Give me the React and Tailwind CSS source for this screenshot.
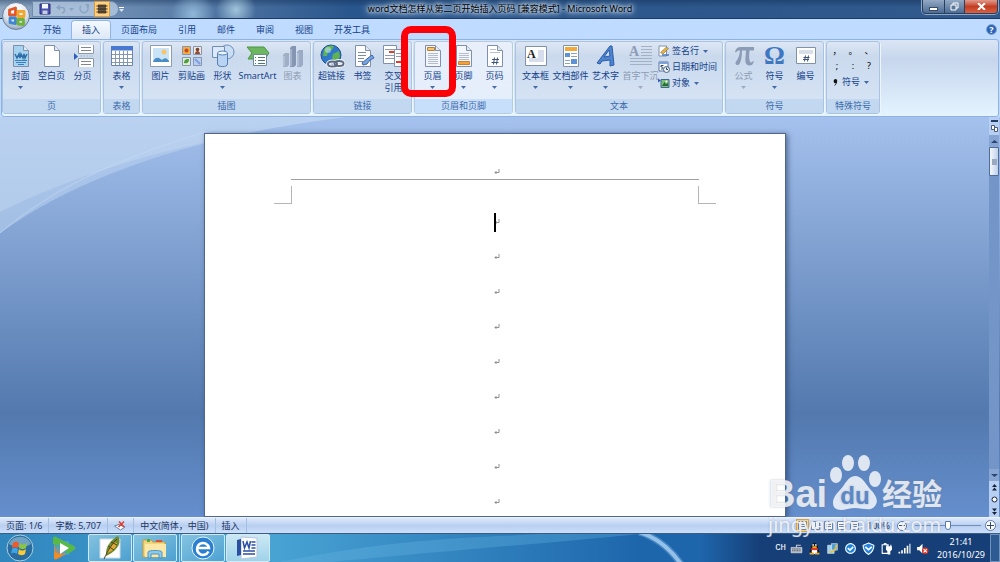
/**
 * App.jsx — Word processor window with ribbon, page view and desktop taskbar
 */

import React, { useState } from "react";

/* ---------- ribbon icons (24 x 24) ---------- */

const Svg = ({ children, className = "size-6" }) => (
  <svg viewBox="0 0 24 24" className={`overflow-visible ${className}`} aria-hidden="true">
    {children}
  </svg>
);

const Sheet = ({ fill = "#fff", children }) => (
  <Svg>
    <path d="M4.5 1.5h10l5 5v16h-15z" fill={fill} stroke="#7f90a8" />
    <path d="M14.5 1.5v5h5" fill="#e3eaf4" stroke="#7f90a8" />
    {children}
  </Svg>
);

const CoverIcon = () => (
  <Sheet fill="#a5d3f0">
    <path d="M6 10l2 4 2-4 1 4 1-4 2 4 1-4 1 4 2-4" fill="none" stroke="#2e6ea8" strokeWidth="1.500" />
    <path d="M6 16.500h12M7 18.500h10M9 20.500h6" stroke="#3b7fba" />
  </Sheet>
);

const BreakIcon = () => (
  <Svg>
    <path d="M7.5 1v8.5h15V1M7.5 23v-8.5h15V23" fill="#fff" stroke="#8a99b0" />
    <path d="M10 3.500h10M10 6.500h10M10 17.500h10M10 20.500h10" stroke="#7d8798" />
    <path d="M3 9l4 3.500L3 16z" fill="#2b5fb8" />
    <path d="M9 12h13" stroke="#a9b9cf" strokeDasharray="2 1" />
  </Svg>
);

const TableIcon = () => (
  <Svg>
    <path d="M1.500 2.500h21v19h-21z" fill="#fff" stroke="#6c84ab" />
    <path d="M1 2h22v4.500H1z" fill="#4878cf" />
    <path
      d="M2 10.500h20M2 14.500h20M2 18.500h20M5.500 7v14M9.500 7v14M13.500 7v14M17.500 7v14"
      stroke="#8398b6"
    />
  </Svg>
);

const PictureIcon = () => (
  <Svg>
    <path d="M1.500 1.500h21v21h-21z" fill="#fff" stroke="#8c9cb6" />
    <path d="M4 4h16v14H4z" fill="#c9e4f8" />
    <circle cx="15" cy="8" r="2.500" fill="#f6c56a" />
    <path d="M4 18c1-4 4-5 6-4l3 2c3-3 5-2 7 1v1z" fill="#4a8cc4" />
  </Svg>
);

const ClipArtIcon = () => (
  <Svg>
    <g stroke="#8796ae">
      <path d="M2.500 2.500h8v8h-8z" fill="#f5ad3c" />
      <path d="M13.500 2.500h8v8h-8z" fill="#efe6dc" />
      <path d="M2.500 13.500h8v8h-8z" fill="#dcefd2" />
      <path d="M13.500 13.500h8v8h-8z" fill="#b7cff2" />
    </g>
    <circle cx="6.500" cy="6.500" r="2" fill="#c5482b" />
    <circle cx="17.500" cy="5.500" r="1.800" fill="#744030" />
    <path d="M15 10c0-4 5-4 5 0z" fill="#8e4a34" />
    <path d="M4 19c0-4 3-4 5-4 0 4-2 5-5 4z" fill="#4e9a3c" />
    <path d="M15 15l5 5" stroke="#7ea0dc" strokeWidth="2" />
  </Svg>
);

const ShapesIcon = () => (
  <Svg>
    <circle cx="16" cy="8" r="7" fill="#c9ddf4" stroke="#6f8fbb" />
    <path d="M1.500 2.500h12v11h-12z" fill="#dce9f8" stroke="#6f8fbb" />
    <path d="M6.500 9v11c0 3.500 10 3.500 10 0V9" fill="#b8d4f2" stroke="#5780b5" />
    <ellipse cx="11.500" cy="9" rx="5" ry="2" fill="#eaf3fd" stroke="#5780b5" />
  </Svg>
);

const SmartArtIcon = () => (
  <Svg>
    <path d="M1 3h17l5 6-4 6H2l4-6z" fill="#6cb75f" stroke="#4c9545" />
    <path d="M7.500 10.500h13v11h-13z" fill="#fff" stroke="#6f8a9d" />
    <path d="M12 13.500h7M12 16.500h7M12 19.500h7M9 13.500h1M9 16.500h1M9 19.500h1" stroke="#477a6a" />
  </Svg>
);

const ChartIcon = () => (
  <Svg>
    <path d="M2 11l2-2h4v12l-2 2H2z" fill="#a0aec6" />
    <path d="M9 4l2-2h4v19l-2 2H9z" fill="#8596b3" />
    <path d="M16 8l2-2h4v15l-2 2h-4z" fill="#9cabc5" />
    <path d="M3 12v10M10 5v17M17 9v13" stroke="#c5d0e0" />
  </Svg>
);

const LinkIcon = () => (
  <Svg>
    <circle cx="11" cy="11" r="10" fill="#2f78c8" stroke="#1f4f91" />
    <path d="M4 5c3-4 8-4 10-3l-2 4-4 1-1 5-4 0zM13 10l6-3 1 6-5 5-3-4z" fill="#5fb254" />
    <circle cx="8" cy="6" r="3" fill="#bfe2f6" opacity=".6" />
    <g fill="none" strokeWidth="2">
      <ellipse cx="12.500" cy="20" rx="4.500" ry="2.500" stroke="#f2f5f9" strokeWidth="4" />
      <ellipse cx="19" cy="19.500" rx="4.500" ry="2.500" stroke="#f2f5f9" strokeWidth="4" />
      <ellipse cx="12.500" cy="20" rx="4.500" ry="2.500" stroke="#5c6b82" />
      <ellipse cx="19" cy="19.500" rx="4.500" ry="2.500" stroke="#5c6b82" />
    </g>
  </Svg>
);

const BookmarkIcon = () => (
  <Sheet>
    <path d="M7 8.500h8M7 11.500h8M7 14.500h6M7 17.500h5" stroke="#7b8ba3" />
    <path d="M11 19l6-5 4-3 2 3-4 2-3 4-4 1z" fill="#7aa4df" stroke="#3a66ac" />
  </Sheet>
);

const CrossRefIcon = () => (
  <Svg>
    <path d="M1.500 1.500h13v18h-13z" fill="#fff" stroke="#7f90a8" />
    <path d="M3 5.500h10M3 11.500h10M3 14.500h10" stroke="#8e9bb0" />
    <path d="M7 7h5v2H7z" fill="#d8402c" />
    <path d="M12.500 5.500h10v17h-10z" fill="#fff" stroke="#7f90a8" />
    <path d="M14 17h7v2h-7z" fill="#d8402c" />
    <path d="M14 9.500h7M14 12.500h7" stroke="#8e9bb0" />
  </Svg>
);

const BodyLines = () => (
  <path d="M7 9.500h10M7 11.500h10M7 13.500h10M7 15.500h10M7 17.500h10M7 19.500h10" stroke="#b3bdcc" />
);

const HeaderIcon = () => (
  <Sheet fill="#f3f6fa">
    <BodyLines />
    <path d="M6.500 3.500h7v3h-7z" fill="#f7c36c" stroke="#b5803a" />
  </Sheet>
);

const FooterIcon = () => (
  <Sheet fill="#f3f6fa">
    <BodyLines />
    <path d="M6.500 17.500h11v3h-11z" fill="#f4a13c" stroke="#c9812f" />
  </Sheet>
);

const PageNoIcon = () => (
  <Sheet>
    <path d="M7 5.500h6M7 8.500h10" stroke="#b6c0ce" />
    <path d="M11.500 13.500l-1 7M14.500 13.500l-1 7M9 15.500h7M8.500 18.500h7" stroke="#3d5478" />
  </Sheet>
);

const TextBoxIcon = () => (
  <Svg>
    <path d="M1.500 2.500h21v19h-21z" fill="#fff" stroke="#8391a8" />
    <path d="M14 6h6v12H5v-4h9z" fill="#d5deea" />
    <text x="3" y="14" fontSize="12" fontFamily="Liberation Serif" fontWeight="bold" fill="#222">
      A
    </text>
  </Svg>
);

const QuickPartsIcon = () => (
  <Svg>
    <path d="M4.500 1.500h15v21h-15z" fill="#fff" stroke="#8391a8" />
    <path d="M6 3h12v4H6z" fill="#f2a93b" />
    <path d="M6 9h5v4H6zM12 15h6v5h-6z" fill="#5f92d4" />
    <path d="M12 9.500h6M12 12.500h6M6 16.500h5M6 19.500h5" stroke="#8da2c1" />
  </Svg>
);

const WordArtIcon = () => (
  <Svg>
    <path
      d="M3 19l13-17h2l2 19-4 1v-6l-8 1-2 3zM10 13l6-1-1-6z"
      fill="#4d84cf"
      stroke="#2c5ca6"
      fillRule="evenodd"
    />
  </Svg>
);

const DropCapIcon = () => (
  <Svg>
    <text x="0" y="12" fontSize="14" fontFamily="Liberation Serif" fontWeight="bold" fill="#8d9cb6">
      A
    </text>
    <path
      d="M12 2.500h11M12 5.500h11M12 8.500h11M12 11.500h11M1 14.500h22M1 17.500h22M1 20.500h22"
      stroke="#a3b0c5"
    />
  </Svg>
);

const PiIcon = () => (
  <Svg>
    <path
      d="M3 8c1-4 3-5 6-5h13v3.500h-4.500c-.5 6-.5 9 .5 11 1 1.500 2 1 3-.5l.8.5c-.8 3-2.300 4-4.300 4-3.500 0-4.500-3-4-8l.5-7h-4c0 6-1 11-2.500 13.500-1.500 2-4.500 1-4-1.500 2-3 4-6 4.500-12C6 6.500 5 7 4 8.500z"
      fill="#8d9cb6"
    />
  </Svg>
);

const OmegaIcon = () => (
  <span className="grid size-6 place-items-center font-['Liberation_Serif'] text-[26px] leading-6 font-bold text-[#3e76c2]">
    Ω
  </span>
);

const NumberIcon = () => (
  <Svg>
    <path d="M2.500 3.500h19v16h-19z" fill="#fff" stroke="#8391a8" />
    <path d="M5 6h14v4H5z" fill="#d9dfe8" />
    <path d="M11.500 11.500l-1 6M14.500 11.500l-1 6M9.500 13.500h6M9 15.500h6" stroke="#3d5478" />
  </Svg>
);

/* ---------- ribbon data ---------- */

const TABS = ["开始", "插入", "页面布局", "引用", "邮件", "审阅", "视图", "开发工具"];

const GROUPS = [
  {
    name: "页",
    items: [
      { label: "封面", icon: CoverIcon, menu: true },
      { label: "空白页", icon: Sheet },
      { label: "分页", icon: BreakIcon },
    ],
  },
  { name: "表格", items: [{ label: "表格", icon: TableIcon, menu: true }] },
  {
    name: "插图",
    items: [
      { label: "图片", icon: PictureIcon },
      { label: "剪贴画", icon: ClipArtIcon },
      { label: "形状", icon: ShapesIcon, menu: true },
      { label: "SmartArt", icon: SmartArtIcon, width: "w-[39px]" },
      { label: "图表", icon: ChartIcon, disabled: true },
    ],
  },
  {
    name: "链接",
    items: [
      { label: "超链接", icon: LinkIcon },
      { label: "书签", icon: BookmarkIcon },
      { label: "交叉", second: "引用", icon: CrossRefIcon },
    ],
  },
  {
    name: "页眉和页脚",
    hot: true,
    items: [
      { label: "页眉", icon: HeaderIcon, menu: true, marked: true },
      { label: "页脚", icon: FooterIcon, menu: true },
      { label: "页码", icon: PageNoIcon, menu: true },
    ],
  },
  {
    name: "文本",
    items: [
      { label: "文本框", icon: TextBoxIcon, menu: true, width: "w-[35px]" },
      { label: "文档部件", icon: QuickPartsIcon, menu: true, width: "w-[35px]" },
      { label: "艺术字", icon: WordArtIcon, menu: true, width: "w-[35px]" },
      { label: "首字下沉", icon: DropCapIcon, menu: true, disabled: true, width: "w-[35px]" },
    ],
    extra: TextList,
  },
  {
    name: "符号",
    items: [
      { label: "公式", icon: PiIcon, menu: true, disabled: true },
      { label: "符号", icon: OmegaIcon, menu: true },
      { label: "编号", icon: NumberIcon },
    ],
  },
  { name: "特殊符号", items: [], extra: SpecialSymbols },
];

const Arrow = ({ className = "" }) => (
  <svg viewBox="0 0 5 3" className={`h-[3px] w-[5px] opacity-75 ${className}`} aria-hidden="true">
    <path d="M0 0h5L2.500 3z" fill="currentColor" />
  </svg>
);

function RibbonButton({ item }) {
  const Icon = item.icon;
  return (
    <button
      disabled={item.disabled}
      className={`relative flex flex-col items-center whitespace-nowrap pt-[2px] leading-3 ${
        item.width || "w-[31px]"
      } ${item.disabled ? "text-[#8d9bb3]" : "text-[#15428b]"}`}
    >
      <Icon />
      <span className="mt-[2px]">{item.label}</span>
      {item.second && <span>{item.second}</span>}
      {item.menu && <Arrow className="mt-1" />}
      {item.marked && (
        <span className="pointer-events-none absolute -top-4 -right-2 bottom-[2px] -left-4 z-20 rounded-[10px] border-[7px] border-[#fb0006]" />
      )}
    </button>
  );
}

function TextList() {
  return (
    <div className="flex w-[62px] flex-col pt-px text-[#15428b]">
      <button className="flex h-4 items-center gap-[2px] whitespace-nowrap">
        <Svg className="size-3">
          <path d="M2 2h15v20H2z" fill="#fff" stroke="#8391a8" strokeWidth="2" />
          <path d="M5 15l12-11 4 3-11 11z" fill="#edb341" stroke="#5d5430" />
          <path d="M8 20h14" stroke="#477ac5" strokeWidth="3" />
        </Svg>
        签名行
        <Arrow className="ml-[2px]" />
      </button>
      <button className="flex h-4 items-center gap-[2px] whitespace-nowrap">
        <Svg className="size-3">
          <path d="M2 2h18v18H2z" fill="#fff" stroke="#5873a0" strokeWidth="2" />
          <path d="M2 2h18v4H2z" fill="#7ea3db" />
          <path d="M11 9H6v3c5-1 6 5 0 4" fill="none" stroke="#24406d" strokeWidth="2" />
          <circle cx="17" cy="17" r="6" fill="#eef3fa" stroke="#4a617f" strokeWidth="2" />
          <path d="M17 13v4h3" fill="none" stroke="#24406d" strokeWidth="2" />
        </Svg>
        日期和时间
      </button>
      <button className="flex h-4 items-center gap-[2px] whitespace-nowrap">
        <Svg className="size-3">
          <path d="M6 5h16v16H6z" fill="#7fc079" stroke="#41658f" strokeWidth="2" />
          <path d="M8 18l5-8 3 5 3-4 2 7z" fill="#276d3a" />
          <path d="M0 3l6 4-6 4z" fill="#2b5fb8" />
          <circle cx="17" cy="9" r="2" fill="#fff" />
        </Svg>
        对象
        <Arrow className="ml-[2px]" />
      </button>
    </div>
  );
}

function SpecialSymbols() {
  return (
    <div className="flex w-12 flex-col pt-[2px] text-black">
      <div className="grid h-[14px] grid-cols-3 items-center text-center">
        {["，", "。", "、"].map((s) => (
          <button key={s}>{s}</button>
        ))}
      </div>
      <div className="grid h-4 grid-cols-3 items-center text-center">
        {[";", ":", "?"].map((s) => (
          <button key={s}>{s}</button>
        ))}
      </div>
      <button className="flex h-4 items-center gap-1 pl-1 text-[#15428b]">
        <svg viewBox="0 0 5 7" className="h-[7px] w-[5px]" aria-hidden="true">
          <path d="M1 7l2-3C0 5 0 0 2.500 0S5 5 1 7z" fill="#111" />
        </svg>
        符号
        <Arrow />
      </button>
    </div>
  );
}

function RibbonGroup({ group }) {
  const Extra = group.extra;
  return (
    <section
      className={`flex flex-col rounded-[3px] border shadow-[1px_1px_0_#eef6fd] ${
        group.hot
          ? "border-[#b4cbe4] bg-linear-to-b from-[#e8effa] to-[#e4eefb]"
          : "border-[#a9c4e2] bg-linear-to-b from-[#dde7f5] via-[#cad9ec] via-20% to-[#d8e6f7]"
      }`}
    >
      <div className="flex flex-1 px-[2px]">
        {group.items.map((item) => (
          <RibbonButton key={item.label} item={item} />
        ))}
        {Extra && <Extra />}
      </div>
      <h2
        className={`h-[14px] text-center leading-[13px] text-[#3e6aaa] ${
          group.hot ? "bg-[#c8dffc]" : "bg-[#c1d8f0]"
        }`}
      >
        {group.name}
      </h2>
    </section>
  );
}

/* ---------- window chrome ---------- */

function TitleBar() {
  return (
    <header className="relative flex h-[19px] items-center justify-between border-b border-[#1d3a5f] bg-linear-to-r from-[#8fa8c4] from-0% via-[#29568d] via-35% to-[#31598c]">
      <div className="pointer-events-none absolute inset-0 bg-[radial-gradient(circle_at_193px_14px,#9fc8e4cc,transparent_22px),radial-gradient(circle_at_236px_10px,#bfe0f0bb,transparent_20px),radial-gradient(ellipse_at_160px_8px,#173d6c,transparent_26px),linear-gradient(#0d274b66,transparent_40%)]" />
      <div className="relative ml-8 flex h-4 items-center rounded-r-full border border-[#6f8bb0] bg-[#b3c8e0]/80 pr-2 pl-1">
        <button aria-label="保存" className="px-[2px]">
          <Svg className="size-3">
            <path d="M2 2h20v20H2z" fill="#4a52b0" stroke="#2a3078" strokeWidth="2" />
            <path d="M6 2h12v9H6z" fill="#f3f6fb" />
            <path d="M7 15h10v7H7z" fill="#c5cfe4" />
          </Svg>
        </button>
        <button aria-label="撤消" className="px-[2px]">
          <Svg className="size-3">
            <path d="M5 9h9c7 0 7 10 0 11" fill="none" stroke="#8ba3c2" strokeWidth="3" />
            <path d="M2 9l8-6v12z" fill="#8ba3c2" />
          </Svg>
        </button>
        <Arrow className="text-[#8299b8]" />
        <button aria-label="重复" className="px-1">
          <Svg className="size-3">
            <path d="M6 6a8 8 0 1 0 12 0" fill="none" stroke="#8ba3c2" strokeWidth="3" />
            <path d="M14 2h8v8z" fill="#8ba3c2" />
          </Svg>
        </button>
        <button aria-label="批注" className="grid size-4 place-items-center border border-[#d79b3f] bg-[#ffcf7d]">
          <Svg className="size-3">
            <path d="M4 3h16v18H4z" fill="#6b5640" />
            <path d="M1 6h22M1 12h22M1 18h22" stroke="#2f2820" strokeWidth="2" />
          </Svg>
        </button>
      </div>
      <button aria-label="自定义快速访问工具栏" className="relative mr-auto flex flex-col items-center gap-px text-white">
        <span className="h-px w-[5px] bg-white" />
        <Arrow />
      </button>
      <h1 className="absolute inset-x-0 text-center text-black [text-shadow:0_0_4px_#c5d6ea,0_0_6px_#c5d6ea,0_0_8px_#c5d6ea,0_0_3px_#c5d6ea]">
        word文档怎样从第二页开始插入页码 [兼容模式] - Microsoft Word
      </h1>
      <div className="relative mr-[2px] flex h-[14px] self-start overflow-hidden rounded-b border border-t-0 border-[#28405f] shadow-[0_0_0_1px_#8fa7c4]">
        <button aria-label="最小化" className="grid w-[22px] place-items-center border-r border-[#28405f] bg-linear-to-b from-[#93a9c3] to-[#4d6c94]">
          <span className="mt-1 h-[4px] w-[9px] border border-[#394a62] bg-white" />
        </button>
        <button aria-label="向下还原" className="grid w-5 place-items-center border-r border-[#28405f] bg-linear-to-b from-[#93a9c3] to-[#4d6c94]">
          <svg viewBox="0 0 9 9" className="size-[9px]" aria-hidden="true">
            <path d="M3 1h5v5H3z" fill="none" stroke="#fff" />
            <path d="M1 3h5v5H1z" fill="#5a7698" stroke="#fff" />
          </svg>
        </button>
        <button aria-label="关闭" className="grid w-8 place-items-center bg-linear-to-b from-[#e09a8a] via-[#c33d22] to-[#d9603f]">
          <svg viewBox="0 0 9 7" className="h-[7px] w-[9px]" aria-hidden="true">
            <path d="M1 0l7 7M8 0L1 7" stroke="#fff" strokeWidth="2" />
          </svg>
        </button>
      </div>
    </header>
  );
}

const OfficeButton = () => (
  <button aria-label="Office 按钮" className="absolute top-[2px] left-[2px] z-10">
    <svg viewBox="0 0 28 28" className="size-7" aria-hidden="true">
      <defs>
        <radialGradient id="orb" cx=".5" cy=".25" r=".8">
          <stop offset="0" stopColor="#fff" />
          <stop offset=".6" stopColor="#dbe2ec" />
          <stop offset="1" stopColor="#8a9bb3" />
        </radialGradient>
      </defs>
      <circle cx="14" cy="14" r="13.500" fill="url(#orb)" stroke="#6b7f9d" />
      <g fill="none" strokeWidth="2.800" strokeLinejoin="round">
        <path d="M7.500 8l6-2v7h-6z" stroke="#e2572a" />
        <path d="M16 9.500h6v5h-6z" stroke="#f2a62c" />
        <path d="M8 16h5.500v5.500L8 20.500z" stroke="#3d86d0" />
        <path d="M16 17.500h5.500v5L16 22z" stroke="#6fb33d" />
      </g>
    </svg>
  </button>
);

function TabBar({ active, onSelect }) {
  return (
    <nav className="flex h-5 items-end gap-px bg-[#bfdbff] pr-[3px] pl-[33px]">
      {TABS.map((t) => (
        <button
          key={t}
          onClick={() => onSelect(t)}
          className={`h-[18px] rounded-t-[3px] px-[10px] leading-4 text-[#15428b] ${
            t === active
              ? "bg-linear-to-b from-[#f4f9ff] to-[#dde8f5] shadow-[0_0_0_1px_#93b4dc]"
              : ""
          }`}
        >
          {t}
        </button>
      ))}
      <button
        aria-label="帮助"
        className="mb-1 ml-auto grid size-[11px] place-items-center rounded-full border border-[#7fa5d6] bg-[#2d63b5] font-bold leading-none text-white"
      >
        ?
      </button>
    </nav>
  );
}

/* ---------- document ---------- */

const ParaMark = () => (
  <svg viewBox="0 0 6 6" className="ml-[5px] size-[6px]" aria-hidden="true">
    <path d="M5 0v3.500H1M2.500 2L1 3.500 2.500 5" fill="none" stroke="#777" strokeWidth=".8" />
  </svg>
);

function Document() {
  return (
    <article className="mx-auto mt-4 w-[582px] border border-[#4f6690] bg-white px-[86px] shadow-[2px_1px_5px_#22396099]">
      <div className="flex h-[46px] items-end justify-center border-b border-[#a0a0a0] pb-1">
        <ParaMark />
      </div>
      <div className="-mx-[17px] mt-[6px] flex justify-between">
        <span className="size-[18px] border-r border-b border-[#b5b5b5]" />
        <span className="size-[18px] border-b border-l border-[#b5b5b5]" />
      </div>
      {Array.from({ length: 9 }, (_, i) => (
        <p key={i} className="relative flex h-[35px] items-center justify-center pt-px">
          {i === 0 && <span className="absolute h-[19px] w-[2px] bg-black" />}
          <ParaMark />
        </p>
      ))}
    </article>
  );
}

const ScrollBtn = ({ label, children, className = "h-3" }) => (
  <button aria-label={label} className={`grid w-full place-items-center ${className}`}>
    <svg viewBox="0 0 7 7" className="size-[7px]" aria-hidden="true">
      {children}
    </svg>
  </button>
);

const ScrollBar = () => (
  <div className="mr-px flex w-[10px] flex-col bg-[#b7cff2]">
    <ScrollBtn label="拆分" className="h-1">
      <path d="M0 3h7v2H0z" fill="#233c63" />
    </ScrollBtn>
    <ScrollBtn label="标尺" className="h-[14px]">
      <path d="M.5 .5h3v4h-3zM3.500 2.500h3v4h-3z" fill="#fff" stroke="#4c5c78" />
    </ScrollBtn>
    <ScrollBtn label="向上滚动" className="h-3 bg-[#86a5d3]">
      <path d="M0 5l3.500-3L7 5z" fill="#2c4470" />
    </ScrollBtn>
    <div className="flex-1 bg-[#7395c7]">
      <div className="grid h-[29px] place-items-center rounded-[1px] border border-[#4f6c9c] bg-linear-to-r from-[#f4f8fe] to-[#bfd0e8]">
        <span className="h-[6px] w-[5px] bg-[#9aa9bf]" />
      </div>
    </div>
    <ScrollBtn label="向下滚动" className="h-3 bg-[#86a5d3]">
      <path d="M0 2l3.500 3L7 2z" fill="#2c4470" />
    </ScrollBtn>
    <ScrollBtn label="前一页">
      <path d="M1 3l2.500-3L6 3zM1 6.500l2.500-3 2.500 3z" fill="#16253f" />
    </ScrollBtn>
    <ScrollBtn label="选择浏览对象">
      <circle cx="3.500" cy="3.500" r="2.500" fill="#fff" stroke="#16253f" />
    </ScrollBtn>
    <ScrollBtn label="下一页">
      <path d="M1 .5l2.500 3 2.500-3zM1 4l2.500 3L6 4z" fill="#16253f" />
    </ScrollBtn>
  </div>
);

function Workspace() {
  return (
    <main className="relative flex min-h-0 flex-1 overflow-hidden bg-linear-to-b from-[#a5c1ed] from-0% via-[#5379ae] via-74% to-[#658fcd]">
      <svg
        viewBox="0 0 360 120"
        className="pointer-events-none absolute top-0 left-0 h-[120px] w-[360px]"
        aria-hidden="true"
      >
        <path d="M0 0h345C200 18 80 58 0 116z" fill="#bcd3f0" opacity=".55" />
        <path d="M0 0h345C210 18 90 50 0 95z" fill="#c8dbf2" opacity=".4" />
        <path d="M0 116C60 65 130 38 215 12" fill="none" stroke="#c6daf5" opacity=".6" />
      </svg>
      <div className="relative flex min-w-0 flex-1">
        <Document />
      </div>
      <ScrollBar />
    </main>
  );
}

/* ---------- status bar ---------- */

const Cell = ({ children, className = "" }) => (
  <span className={`flex h-full items-center border-r border-[#a3bfe3] px-[6px] ${className}`}>
    {children}
  </span>
);

function ViewIcon({ kind }) {
  return (
    <svg viewBox="0 0 9 9" className="size-[9px]" aria-hidden="true">
      <path d="M.5 .5h8v8h-8z" fill="#f7faff" stroke="#6d83a6" />
      {kind === "阅读版式" ? (
        <path d="M4.500 1v7" stroke="#6d83a6" />
      ) : (
        <path d="M2 3.500h5M2 5.500h5" stroke="#6d83a6" />
      )}
    </svg>
  );
}

function StatusBar() {
  const [zoom, setZoom] = useState(50);
  return (
    <footer className="flex h-4 items-center border-t border-[#eaf3ff] bg-linear-to-b from-[#dfeafb] via-[#b9cff0] to-[#cbdffa] text-[#1a3564]">
      <Cell>页面: 1/6</Cell>
      <Cell>字数: 5,707</Cell>
      <Cell className="w-[26px]">
        <Svg className="size-3">
          <path d="M1 12l9-3 12 5-9 6z" fill="#fff" stroke="#667fa8" strokeWidth="2" />
          <path d="M10 3l10 11M20 3L9 14" stroke="#e03a2a" strokeWidth="3" />
        </Svg>
      </Cell>
      <Cell>中文(简体，中国)</Cell>
      <Cell>插入</Cell>
      <div className="mr-[6px] ml-auto flex items-center">
        {["页面视图", "阅读版式", "Web 版式", "大纲视图", "普通视图"].map((v, i) => (
          <button
            key={v}
            aria-label={v}
            className={`grid h-[13px] w-[13px] place-items-center ${
              i === 0 ? "border border-[#d9a24a] bg-[#ffd88a]" : ""
            }`}
          >
            <ViewIcon kind={v} />
          </button>
        ))}
      </div>
      <button className="w-[22px]">100%</button>
      <button aria-label="缩小" className="mx-2 grid size-[10px] place-items-center rounded-full border border-[#5b78a6] bg-white">
        <span className="h-px w-[6px] bg-[#2f4a78]" />
      </button>
      <input
        type="range"
        aria-label="显示比例"
        value={zoom}
        onChange={(e) => setZoom(Number(e.target.value))}
        className="h-px w-[66px] appearance-none bg-[#6f8fbe] [&::-webkit-slider-thumb]:h-[9px] [&::-webkit-slider-thumb]:w-[6px] [&::-webkit-slider-thumb]:appearance-none [&::-webkit-slider-thumb]:rounded-b-full [&::-webkit-slider-thumb]:border [&::-webkit-slider-thumb]:border-[#5b78a6] [&::-webkit-slider-thumb]:bg-white"
      />
      <button aria-label="放大" className="mr-1 ml-1 grid size-[11px] place-items-center rounded-full border border-[#5b78a6] bg-white">
        <svg viewBox="0 0 7 7" className="size-[7px]" aria-hidden="true">
          <path d="M3.500 0v7M0 3.500h7" stroke="#2f4a78" />
        </svg>
      </button>
    </footer>
  );
}

/* ---------- desktop taskbar ---------- */

const TaskButton = ({ label, children, active }) => (
  <button
    aria-label={label}
    className={`grid h-7 w-11 place-items-center rounded-[2px] border border-[#cfe9f7] ${
      active
        ? "bg-linear-to-b from-[#cbe8f4] to-[#9fd3ea]"
        : "bg-linear-to-br from-[#8cc8e3]/90 to-[#4da3d2]/80"
    }`}
  >
    {children}
  </button>
);

const TRAY = [
  {
    name: "键盘",
    art: (
      <>
        <path d="M2 10h20v10H2z" fill="#b9bec6" stroke="#e3e6ea" />
        <path d="M4 13h16M4 16h16" stroke="#555c68" strokeDasharray="2 1" strokeWidth="2" />
        <path d="M12 10V6h8" fill="none" stroke="#c5cad2" strokeWidth="2" />
      </>
    ),
  },
  {
    name: "QQ",
    art: (
      <>
        <path d="M5 14c0-16 14-16 14 0l2 4-3 1H6l-3-1z" fill="#141414" />
        <ellipse cx="12" cy="17" rx="5" ry="5" fill="#fff" />
        <path d="M6 11h12v4H6z" fill="#e23b2b" />
        <path d="M3 20h8v3H3zM13 20h8v3h-8zM8 8h8v3H8z" fill="#f6a81c" />
        <path d="M8 4h3v3H8zM13 4h3v3h-3z" fill="#fff" />
      </>
    ),
  },
  {
    name: "同步",
    art: (
      <>
        <path d="M3 6h12v15H3z" fill="#9fd0ee" stroke="#e9f5fc" />
        <path d="M10 3h11v12H10z" fill="#4aa0d8" stroke="#fff" />
        <path d="M6 18C14 20 20 12 19 5" fill="none" stroke="#f1bf3a" strokeWidth="3" />
      </>
    ),
  },
  {
    name: "助手",
    art: (
      <>
        <circle cx="12" cy="12" r="9" fill="#1d84dc" stroke="#fff" strokeWidth="2" />
        <path d="M7 11l4 4 6-6" fill="none" stroke="#fff" strokeWidth="3" />
      </>
    ),
  },
  {
    name: "安全卫士",
    art: (
      <>
        <path d="M12 2l10 4c0 8-3 13-10 17C5 19 2 14 2 6z" fill="#2583e0" stroke="#fff" strokeWidth="2" />
        <path d="M6 9l6 5 6-5" fill="none" stroke="#fff" strokeWidth="3" />
      </>
    ),
  },
  {
    name: "电源",
    art: (
      <>
        <path d="M4 5h11v16H4z" fill="none" stroke="#fff" strokeWidth="2" />
        <path d="M7 2h5v3H7z" fill="#fff" />
        <path d="M12 9h9v5l-3 3v5h-3v-5l-3-3zM13 5v4M20 5v4" fill="#fff" stroke="#fff" strokeWidth="2" />
      </>
    ),
  },
  {
    name: "网络",
    art: <path d="M1 18h3v3H1zM6 15h3v6H6zM11 11h3v10h-3zM16 7h3v14h-3zM21 3h2v18h-2z" fill="#fff" />,
  },
  {
    name: "音量",
    art: (
      <>
        <path d="M2 9h4l6-6v18l-6-6H2z" fill="#fff" />
        <circle cx="17" cy="16" r="6" fill="#dc3325" />
        <path d="M14 13l6 6M20 13l-6 6" stroke="#fff" strokeWidth="2" />
      </>
    ),
  },
];

function TaskBar() {
  return (
    <div className="relative flex h-[29px] items-center overflow-hidden border-t border-[#3c5c80] bg-linear-to-r from-[#2e86bd] from-0% via-[#4aa5d4] via-26% to-[#1e66ac] to-64%">
      <div className="pointer-events-none absolute inset-y-0 right-0 w-[30%] bg-linear-to-r from-transparent to-[#163f78] to-20%" />
      <svg
        viewBox="0 0 800 28"
        preserveAspectRatio="none"
        className="pointer-events-none absolute inset-y-0 left-0 h-full w-4/5"
        aria-hidden="true"
      >
        <path d="M280 28C400 4 470 4 540 0H640C560 8 480 14 330 28z" fill="#6bbbe6" opacity=".3" />
      </svg>
      <svg
        viewBox="0 0 60 28"
        className="pointer-events-none absolute inset-y-0 left-[65%] h-7 w-[60px] -translate-x-1/4"
        aria-hidden="true"
      >
        <path d="M4 -2c20 6 32 18 42 32" fill="none" stroke="#9fcdf6" strokeWidth="7" opacity=".3" />
        <path d="M4 -2c20 6 32 18 42 32" fill="none" stroke="#b5daf9" strokeWidth="4" opacity=".7" />
      </svg>
      <button aria-label="开始菜单" className="relative ml-[6px]">
        <svg viewBox="0 0 28 28" className="size-7" aria-hidden="true">
          <circle cx="14" cy="14" r="13" fill="#2a6c9e" stroke="#a7cde0" />
          <path d="M3 10a12 12 0 0 1 22 0c-6 4-16 4-22 0z" fill="#9dc7dc" opacity=".6" />
          <path d="M7 9c2-2 4-2 6 0l-1 5c-2-1-4-1-6 0z" fill="#ee5a2b" />
          <path d="M14 9c2 2 4 2 7 0l-1 5c-3 2-5 1-7 0z" fill="#8cc63e" />
          <path d="M6 15c2-2 4-1 6 0l-1 5c-2-1-4-2-6 0z" fill="#3fa4e6" />
          <path d="M13 15c2 2 4 2 7 0l-1 5c-3 2-5 1-7 0z" fill="#fbcb3a" />
        </svg>
      </button>
      <button aria-label="播放器" className="relative ml-[18px]">
        <Svg>
          <path d="M4 5h13v14H4z" fill="#3aa0e0" />
          <path d="M2 9v13c0 1 1 2 3 1l9-5z" fill="#f08b25" />
          <path d="M4 1c-2-1-3 0-3 2v5l15 10 6-4c2-1 2-3 0-4z" fill="#58b947" />
          <path d="M2 9l8-1 6 5-5 6-8-3z" fill="#3aa0e0" opacity=".6" />
          <path d="M8 7l9 5-9 6z" fill="#fff" />
        </Svg>
      </button>
      <div className="relative ml-3 flex gap-px">
        <TaskButton label="记事本">
          <Svg>
            <path d="M2 3h20v19H2z" fill="#fdfdfd" stroke="#d5dbe2" />
            <path d="M8 20C7 10 14 3 20 0c4 6 0 14-10 19z" fill="#6f8a2c" />
            <path d="M9 17c2-6 5-9 7-11l3 1c-1 5-4 8-10 10z" fill="#e0a832" />
            <path d="M13 6l6 3M10 10l6 4" stroke="#3d4a1c" />
            <path d="M6 23C10 14 14 8 19 3" fill="none" stroke="#4c4322" />
          </Svg>
        </TaskButton>
        <TaskButton label="资源管理器">
          <Svg>
            <path d="M0 4h8l2 2h12v15H0z" fill="#f2d47a" stroke="#c69c3c" />
            <path d="M2 8h21v13H2z" fill="#fae8a8" />
            <path d="M4 3h3v3H4z" fill="#4daa48" />
            <path d="M13 4h6v2h-6z" fill="#d8533c" />
            <path d="M5 22v-6c0-2 14-2 14 0v6h-3v-4H8v4z" fill="#8ecbea" stroke="#4d94c0" />
          </Svg>
        </TaskButton>
        <span className="h-7 w-[2px] border-r border-[#cfe9f7]/70" />
        <TaskButton label="浏览器">
          <Svg>
            <circle cx="12" cy="12" r="11" fill="#2b7fd0" stroke="#e8f5fc" />
            <path d="M17.500 15.500a6 6 0 1 1 .5-3.500H7" fill="none" stroke="#fff" strokeWidth="2.500" />
          </Svg>
        </TaskButton>
        <TaskButton label="Word" active>
          <Svg>
            <path d="M5 1l16 1v19l-16 2z" fill="#fff" stroke="#b8c4da" />
            <path d="M1 4l4-1v16l-4 1z" fill="#2b4fa2" />
            <path d="M7 5l1.500 7L11 6l2 6 1.500-7M15.500 6h4M15.500 9h4M15.500 12h4M7 15h12M7 18h12" fill="none" stroke="#2b4fa2" strokeWidth="1.500" />
          </Svg>
        </TaskButton>
      </div>
      <div className="relative ml-auto flex items-center text-white">
        <span className="mr-1 font-['Liberation_Mono']">CH</span>
        <div className="flex gap-[5px]">
          {TRAY.map((t) => (
            <button key={t.name} aria-label={t.name}>
              <Svg className="size-[13px]">{t.art}</Svg>
            </button>
          ))}
        </div>
        <div className="mr-px ml-1 w-[56px] text-center leading-[13px]">
          <div>21:41</div>
          <div>2016/10/29</div>
        </div>
        <button aria-label="显示桌面" className="h-7 w-[10px] border border-[#6f93bb] bg-[#2d5a93]" />
      </div>
    </div>
  );
}

/* ---------- site mark over the lower right corner ---------- */

const SiteMark = () => (
  <div className="pointer-events-none absolute right-[54px] bottom-[22px] z-30 w-[178px] text-white/80 [text-shadow:0_0_2px_#64748b80]">
    <div className="flex h-14 items-end">
      <span className="w-[62px] font-['Liberation_Sans'] text-[38px] leading-8 font-bold">Bai</span>
      <svg viewBox="0 0 52 56" className="h-14 w-[52px]" aria-hidden="true">
        <g fill="#fff" opacity=".8">
          <ellipse cx="6" cy="21" rx="6" ry="8" />
          <ellipse cx="18" cy="9" rx="6" ry="8" />
          <ellipse cx="34" cy="9" rx="6" ry="8" />
          <ellipse cx="45" cy="25" rx="6" ry="8" />
          <path d="M25 22c7 0 10 7 15 13 6 6 9 12 5 17-4 6-12 2-20 2S9 59 4 53c-3-6 1-12 6-17s8-14 15-14z" />
        </g>
        <text x="25" y="50" textAnchor="middle" fontSize="24" fontWeight="bold" fontFamily="Liberation Sans" fill="#5d88c6">
          du
        </text>
      </svg>
      <span className="text-[30px] leading-8 font-bold">经验</span>
    </div>
    <div className="text-[20px] leading-[30px]">jingyan.baidu.com</div>
  </div>
);

export default function App() {
  const [tab, setTab] = useState("插入");

  return (
    <div className="relative flex h-screen flex-col overflow-hidden bg-[#bfdbff] font-['Noto_Sans','Noto_Sans_CJK_SC',sans-serif] text-[9px] leading-3 select-none">
      <TitleBar />
      <OfficeButton />
      <TabBar active={tab} onSelect={setTab} />
      <div className="mx-px flex h-[78px] gap-[2px] rounded-[3px] border border-[#8db2e3] bg-linear-to-b from-[#dbe6f4] via-[#c7d6ed] via-25% to-[#e3f4ff] pt-px pb-[2px]">
        {GROUPS.map((g) => (
          <RibbonGroup key={g.name} group={g} />
        ))}
      </div>
      <Workspace />
      <StatusBar />
      <TaskBar />
      <SiteMark />
    </div>
  );
}
